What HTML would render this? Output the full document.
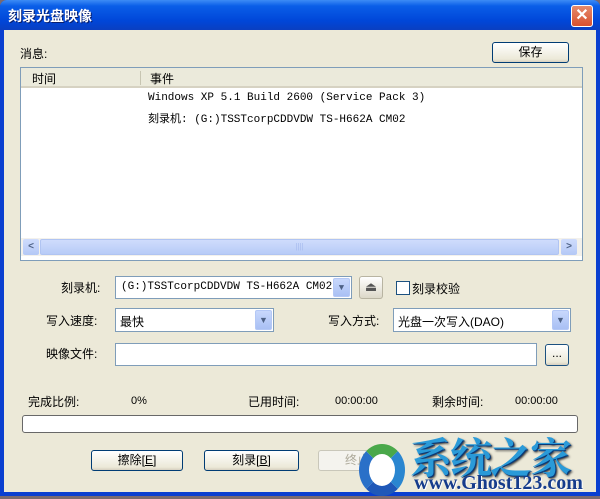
<!DOCTYPE html>
<html><head><meta charset="utf-8"><style>
*{box-sizing:border-box;margin:0;padding:0}
body{width:600px;height:499px;overflow:hidden;background:#7a6a70;font-family:"Liberation Sans","Noto Sans CJK SC",sans-serif;font-size:12px;color:#000;position:relative}
.a{position:absolute}
.win{left:0;top:0;width:600px;height:496px;background:#0a3fd0;border-radius:7px 7px 0 0}
.title{left:0;top:0;width:600px;height:30px;background:linear-gradient(#3d8cf5,#0a5ee8 20%,#0046d8 70%,#0a3fc0);border-radius:7px 7px 0 0}
.body{left:4px;top:30px;width:592px;height:462px;background:#ece9d8}
.btn{border:1px solid #003c74;border-radius:3px;background:linear-gradient(#fff,#ece9d8 85%,#d6d0c0);text-align:center;line-height:19px;font-size:12px}
.field{background:#fff;border:1px solid #7f9db9}
.dd{width:17px;top:1px;bottom:1px;right:1px;background:linear-gradient(#c8d8fc,#a9c0f4);border:1px solid #b4c8f6;border-radius:2px;color:#4d6185;font-size:9px;text-align:center;line-height:18px}
.mono{font-family:"Liberation Mono","Noto Sans CJK SC",monospace;font-size:11px}
</style></head><body>
<div class="a win"></div>
<div class="a title"></div>
<div class="a" style="left:8px;top:6px;color:#fff;font-weight:bold;font-size:14px;text-shadow:1px 1px #0a1f6e">刻录光盘映像</div>
<div class="a" style="left:571px;top:5px;width:22px;height:22px;background:linear-gradient(#e58a6c,#d8502e);border:1px solid #fff;border-radius:3px;color:#fff;font-weight:bold;font-size:16px;text-align:center;line-height:20px">✕</div>
<div class="a body"></div>
<div class="a" style="left:20px;top:45px">消息:</div>
<div class="a btn" style="left:492px;top:42px;width:77px;height:21px">保存</div>
<div class="a" style="left:20px;top:67px;width:563px;height:194px;background:#fff;border:1px solid #7f9db9"></div>
<div class="a" style="left:21px;top:68px;width:561px;height:20px;background:#ebeadb;border-bottom:2px solid #d6d2c2"></div>
<div class="a" style="left:140px;top:71px;width:1px;height:14px;background:#c7c5b2"></div>
<div class="a" style="left:32px;top:70px">时间</div>
<div class="a" style="left:150px;top:70px">事件</div>
<div class="a mono" style="left:148px;top:92px">Windows XP 5.1 Build 2600 (Service Pack 3)</div>
<div class="a mono" style="left:148px;top:110px">刻录机: (G:)TSSTcorpCDDVDW TS-H662A CM02</div>
<div class="a" style="left:21px;top:238px;width:561px;height:18px;background:#f3f1ec"></div>
<div class="a" style="left:23px;top:239px;width:16px;height:16px;background:linear-gradient(#cfdcfc,#b4c8f6);border-radius:2px;color:#4d6185;font-size:10px;text-align:center;line-height:16px;font-weight:bold">&lt;</div>
<div class="a" style="left:40px;top:239px;width:519px;height:16px;background:linear-gradient(#cfdcfc,#b7cbf7);border-radius:2px;border:1px solid #b0c4f2;color:#a8bcef;font-size:8px;text-align:center;line-height:14px">||||</div>
<div class="a" style="left:561px;top:239px;width:16px;height:16px;background:linear-gradient(#cfdcfc,#b4c8f6);border-radius:2px;color:#4d6185;font-size:10px;text-align:center;line-height:16px;font-weight:bold">&gt;</div>

<div class="a" style="left:61px;top:279px">刻录机:</div>
<div class="a field mono" style="left:115px;top:276px;width:237px;height:23px;padding:4px 0 0 5px">(G:)TSSTcorpCDDVDW TS-H662A CM02<div class="a dd">▼</div></div>
<div class="a" style="left:359px;top:276px;width:24px;height:23px;background:linear-gradient(#fff,#dcd8c8);border:1px solid #b8b4a2;border-radius:3px;text-align:center;line-height:20px;color:#555;font-size:13px">⏏</div>
<div class="a" style="left:396px;top:281px;width:14px;height:14px;background:#fff;border:1px solid #1c5180"></div>
<div class="a" style="left:412px;top:280px">刻录校验</div>

<div class="a" style="left:46px;top:312px">写入速度:</div>
<div class="a field" style="left:115px;top:308px;width:159px;height:24px;padding:4px 0 0 4px">最快<div class="a dd">▼</div></div>
<div class="a" style="left:328px;top:312px">写入方式:</div>
<div class="a field" style="left:393px;top:308px;width:178px;height:24px;padding:4px 0 0 4px">光盘一次写入(DAO)<div class="a dd">▼</div></div>

<div class="a" style="left:46px;top:345px">映像文件:</div>
<div class="a field" style="left:115px;top:343px;width:422px;height:23px"></div>
<div class="a btn" style="left:545px;top:344px;width:24px;height:22px;border-color:#1c5180;line-height:16px">...</div>

<div class="a" style="left:28px;top:393px">完成比例:</div>
<div class="a" style="left:131px;top:395px;font-size:11px">0%</div>
<div class="a" style="left:248px;top:393px">已用时间:</div>
<div class="a" style="left:335px;top:395px;font-size:11px">00:00:00</div>
<div class="a" style="left:432px;top:393px">剩余时间:</div>
<div class="a" style="left:515px;top:395px;font-size:11px">00:00:00</div>
<div class="a" style="left:22px;top:415px;width:556px;height:18px;background:#fff;border:1px solid #686868;border-radius:3px"></div>

<div class="a btn" style="left:91px;top:450px;width:92px;height:21px">擦除[<u>E</u>]</div>
<div class="a btn" style="left:204px;top:450px;width:95px;height:21px">刻录[<u>B</u>]</div>
<div class="a" style="left:318px;top:450px;width:78px;height:21px;border:1px solid #c9c7ba;border-radius:3px;background:#f4f3ee;color:#aca899;text-align:center;line-height:19px">终止</div>

<div class="a" style="left:359px;top:444px;width:46px;height:52px;border-radius:50%;border:10px solid #1f58b8;border-left-color:#2a70c8;border-top-color:#4aa84a;border-right-color:#2a86d0;background:#fff"></div>
<div class="a" style="left:410px;top:434px;font-size:42px;font-weight:bold;color:#2a9ad8;text-shadow:1px 1px 0 #0a3a78,2px 2px 2px #333;font-family:'Noto Serif CJK SC','Noto Sans CJK SC',serif;line-height:44px;letter-spacing:-2px">系统之家</div>
<div class="a" style="left:414px;top:472px;font-size:20px;font-weight:bold;color:#163c8c;font-family:'Liberation Serif',serif;line-height:22px;text-shadow:1px 1px 0 #fff">www.Ghost123.com</div>
</body></html>
